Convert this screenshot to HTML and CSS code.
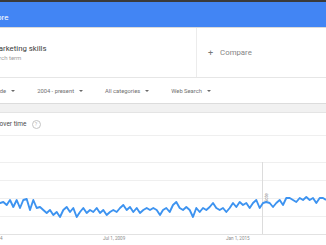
FILE: index.html
```html
<!DOCTYPE html>
<html>
<head>
<meta charset="utf-8">
<link rel="stylesheet" href="styles.css">
</head>
<body>
<div class="page">
  <div class="strip"></div>
  <header class="header"><span class="brand">Explore</span></header>
  <section class="compare-card">
    <div class="term">
      <div class="term-name">marketing skills</div>
      <div class="term-type">Search term</div>
    </div>
    <div class="compare">
      <span class="plus">+</span>
      <span class="compare-label">Compare</span>
    </div>
  </section>
  <nav class="filters">
    <div class="filter">Worldwide<span class="caret"></span></div>
    <div class="filter">2004 - present<span class="caret"></span></div>
    <div class="filter">All categories<span class="caret"></span></div>
    <div class="filter">Web Search<span class="caret"></span></div>
  </nav>
  <section class="chart-card">
    <div class="chart-title">Interest over time<span class="help">?</span></div>
    <svg class="chart" width="358" height="110" viewBox="-32 136 358 110">
      <g class="grid">
        <line x1="-32" y1="162.5" x2="326" y2="162.5"/>
        <line x1="-32" y1="180.5" x2="326" y2="180.5"/>
        <line x1="-32" y1="198.5" x2="326" y2="198.5"/>
        <line x1="-32" y1="216.5" x2="326" y2="216.5"/>
      </g>
      <line class="axis" x1="-32" y1="234.5" x2="326" y2="234.5"/>
      <line class="marker" x1="262.5" y1="162" x2="262.5" y2="234"/>
      <text class="marker-text" transform="translate(267.5,203) rotate(-90)">Note</text>
      <polyline class="series" points="-32,204 -28,201 -24,206 -20,200 -16,205 -12,199 -8,206 -4,201 0,203 3.3,202 6.7,205 10,200 13.3,207 16.7,200 20,208 23.3,200 26.7,199 30,210 33.3,200 36.7,208 40,207 43.3,210 46.7,213 50,210 53.3,215 56.7,212 60,217 63.3,210 66.7,207 70,212 73.3,208 76.7,217 80,212 83.3,208 86.7,213 90,210 93.3,212 96.7,208 100,213 103.3,210 106.7,215 110,212 113.3,210 116.7,212 120,208 123.3,205 126.7,210 130,207 133.3,212 136.7,208 140,213 143.3,210 146.7,208 150,210 153.3,208 156.7,210 160,215 163,210 166.3,208 169.7,212 173,205 176.3,202 179.7,208 183,210 186.3,207 189.7,210 193,217 196.3,208 199.7,212 203,208 206.3,210 209.7,207 213,203 216.3,208 219.7,210 223,208 226.3,212 229.7,208 233,203 236.3,207 239.7,202 243,205 246.3,203 249.7,208 253,203 256.3,200 259.7,208 263,203 266.3,202 269.7,203 273,207 276.3,203 279.7,200 283,205 286.3,198 289.7,198 293,200 296.3,202 299.7,198 303,200 306.3,197 309.7,200 313,198 316.3,203 319.7,198 323,198 326,200"/>
      <text class="tick end" x="2.5" y="239.5">Jan 1, 2004</text>
      <text class="tick" x="103" y="239.5">Jul 1, 2009</text>
      <text class="tick" x="226" y="239.5">Jan 1, 2015</text>
    </svg>
  </section>
</div>
</body>
</html>
```
FILE: styles.css
```css
html, body {
  margin: 0;
  padding: 0;
  background: #f1f1f1;
  overflow: hidden;
  font-family: Roboto, "Liberation Sans", sans-serif;
}

.page {
  margin-left: -32px;
  width: 358px;
}

.strip {
  height: 2px;
  background: #3a3a3a;
}

.header {
  height: 25px;
  background: #4285f4;
  border-bottom: 1px solid #dadada;
  padding-left: 14px;
  line-height: 25px;
}

.brand {
  color: #fff;
  font-size: 8px;
}

.compare-card {
  display: flex;
  height: 49px;
  background: #fff;
  border-bottom: 1px solid #e6e6e6;
}

.term {
  width: 204px;
  padding-left: 24px;
  padding-top: 16px;
  border-right: 1px solid #ececec;
}

.term-name {
  font-size: 7.8px;
  line-height: 10px;
  color: #3c3c3c;
}

.term-type {
  font-size: 6px;
  line-height: 8px;
  color: #a0a0a0;
  text-indent: -3px;
}

.compare {
  display: flex;
  align-items: center;
  padding-left: 11px;
  gap: 7px;
}

.plus {
  font-size: 9px;
  color: #777;
}

.compare-label {
  font-size: 7.8px;
  color: #858585;
}

.filters {
  display: flex;
  gap: 22px;
  height: 25px;
  padding-left: 11px;
  background: #fff;
  border-bottom: 1px solid #dcdcdc;
  margin-bottom: 8px;
}

.filter {
  display: flex;
  align-items: center;
  gap: 5px;
  font-size: 5.8px;
  color: #707070;
}

.caret {
  width: 0;
  height: 0;
  border-left: 2px solid transparent;
  border-right: 2px solid transparent;
  border-top: 2.5px solid #6a6a6a;
}

.chart-card {
  background: #fff;
  border-top: 1px solid #e4e4e4;
}

.chart-title {
  display: flex;
  align-items: center;
  height: 22px;
  padding-left: 8px;
  font-size: 6.5px;
  color: #4a4a4a;
  border-bottom: 1px solid #efefef;
}

.help {
  display: flex;
  align-items: center;
  justify-content: center;
  width: 7px;
  height: 7px;
  margin-left: 5px;
  border: 1px solid #c4c4c4;
  border-radius: 50%;
  font-size: 5px;
  color: #b0b0b0;
}

.chart {
  display: block;
}

.grid line {
  stroke: #efefef;
  stroke-width: 1;
}

.axis {
  stroke: #e2e2e2;
  stroke-width: 1;
}

.marker {
  stroke: #dcdcdc;
  stroke-width: 1;
}

.marker-text {
  font-size: 4.5px;
  fill: #8a8a8a;
}

.series {
  fill: none;
  stroke: #3d93f0;
  stroke-width: 1.9;
  stroke-linejoin: round;
}

.tick {
  font-size: 4.6px;
  fill: #8c8c8c;
}

.tick.end {
  text-anchor: end;
}
```
